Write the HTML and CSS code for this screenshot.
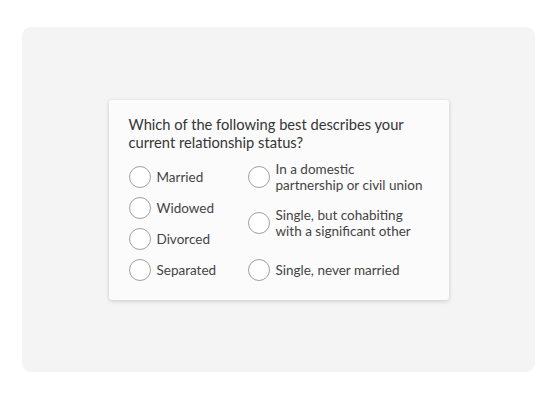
FILE: index.html
```html
<!DOCTYPE html>
<html lang="en">
<head>
    <meta charset="UTF-8">
    <meta name="viewport" content="width=device-width, initial-scale=1.0">
    <title>Relationship status</title>
    <link rel="stylesheet" href="styles.css">
</head>
<body>

    <!-- Gray stage -->
    <div class="stage">

        <!-- Question card -->
        <div class="card">
            <p class="question">Which of the following best describes your current relationship status?</p>

            <div class="options">
                <label class="option r1 c1"><span class="radio"></span><span class="label">Married</span></label>
                <label class="option r2 c1"><span class="radio"></span><span class="label">Widowed</span></label>
                <label class="option r3 c1"><span class="radio"></span><span class="label">Divorced</span></label>
                <label class="option r4 c1"><span class="radio"></span><span class="label">Separated</span></label>

                <label class="option r1 c2"><span class="radio"></span><span class="label">In a domestic<br>partnership or civil union</span></label>
                <label class="option r23 c2"><span class="radio"></span><span class="label">Single, but cohabiting<br>with a significant other</span></label>
                <label class="option r4 c2"><span class="radio"></span><span class="label">Single, never married</span></label>
            </div>
        </div>

    </div>

</body>
</html>
```

FILE: styles.css
```css
body {
    margin: 0;
    padding: 0;
    background-color: #fff;
    font-family: Lato, "Noto Sans", Arial, sans-serif;
}
.stage {
    margin: 27px 22px 0 22px;
    height: 345px;
    width: 513px;
    background-color: #f4f4f4;
    border-radius: 9px;
    display: flex;
    align-items: flex-start;
    justify-content: center;
    padding-top: 73px;
    box-sizing: border-box;
}
.card {
    width: 340px;
    height: 200px;
    box-sizing: border-box;
    padding: 15px 20px 0 20px;
    background-color: #fbfbfb;
    border-radius: 3px;
    box-shadow: 0 1px 4px rgba(0, 0, 0, 0.18);
}
.question {
    margin: 0;
    font-size: 14.7px;
    line-height: 18px;
    color: #353535;
}
.options {
    display: grid;
    grid-template-columns: 119px 1fr;
    grid-template-rows: repeat(4, 31px);
    align-items: center;
    margin-top: 10px;
}
.option {
    display: flex;
    align-items: center;
    font-size: 13.5px;
    line-height: 16px;
    color: #444;
    white-space: nowrap;
}
.r1 { grid-row: 1; }
.r2 { grid-row: 2; }
.r3 { grid-row: 3; }
.r4 { grid-row: 4; }
.r23 { grid-row: 2 / 4; }
.c1 { grid-column: 1; }
.c2 { grid-column: 2; }
.radio {
    flex: none;
    width: 20px;
    height: 20px;
    border: 1px solid #a0a0a0;
    border-radius: 50%;
    background-color: #fff;
    margin-right: 6px;
}
```
